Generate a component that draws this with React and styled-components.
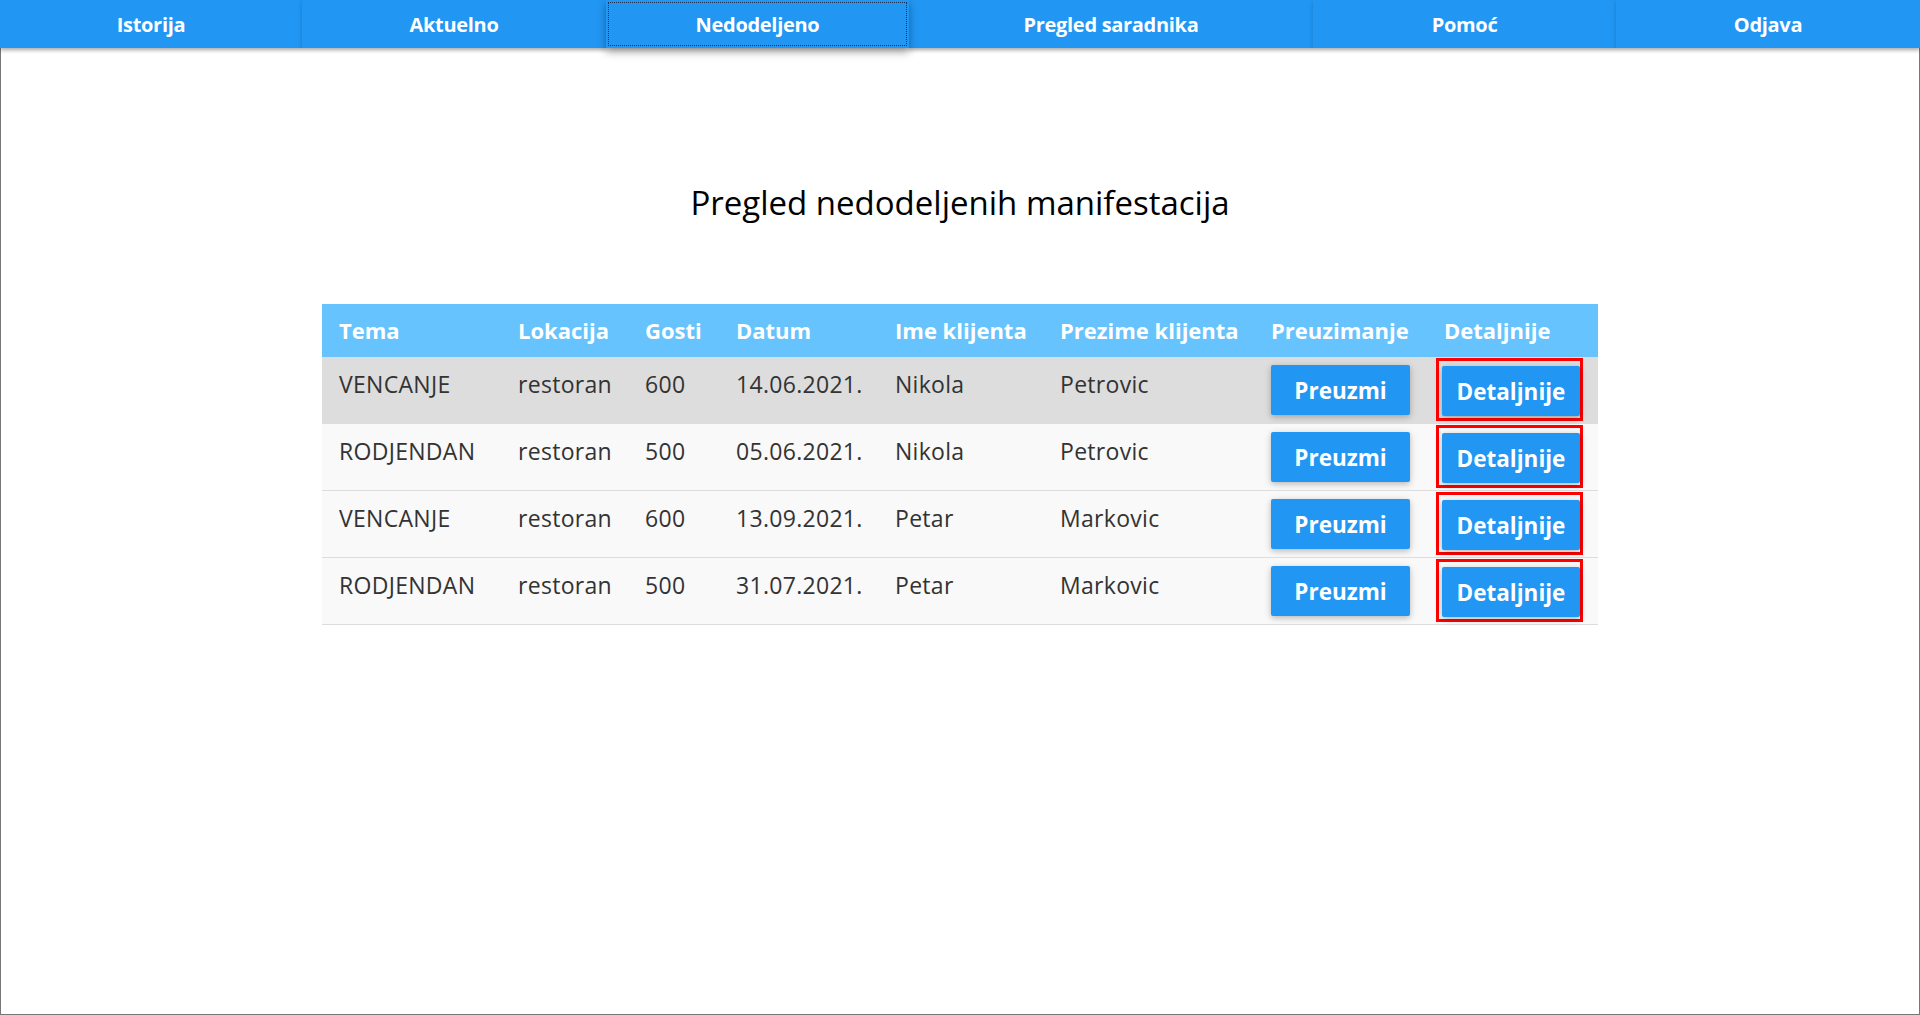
import React from 'react';
import styled, { createGlobalStyle } from 'styled-components';

const GlobalStyle = createGlobalStyle`
	html, body {
		margin: 0;
		padding: 0;
		background: #fff;
	}
	body {
		font-family: "Open Sans", "Noto Sans", sans-serif;
		color: #000;
	}
`;

const navItems = [
	{ label: 'Istorija', width: 302 },
	{ label: 'Aktuelno', width: 304 },
	{ label: 'Nedodeljeno', width: 303, active: true },
	{ label: 'Pregled saradnika', width: 404 },
	{ label: 'Pomoć', width: 303 },
	{ label: 'Odjava', width: 304 },
];

const columns = [
	{ title: 'Tema', width: 188 },
	{ title: 'Lokacija', width: 127 },
	{ title: 'Gosti', width: 91 },
	{ title: 'Datum', width: 159 },
	{ title: 'Ime klijenta', width: 165 },
	{ title: 'Prezime klijenta', width: 211 },
	{ title: 'Preuzimanje', width: 173 },
	{ title: 'Detaljnije', width: 162 },
];

const rows = [
	{ tema: 'VENCANJE', lokacija: 'restoran', gosti: 600, datum: '14.06.2021.', ime: 'Nikola', prezime: 'Petrovic' },
	{ tema: 'RODJENDAN', lokacija: 'restoran', gosti: 500, datum: '05.06.2021.', ime: 'Nikola', prezime: 'Petrovic' },
	{ tema: 'VENCANJE', lokacija: 'restoran', gosti: 600, datum: '13.09.2021.', ime: 'Petar', prezime: 'Markovic' },
	{ tema: 'RODJENDAN', lokacija: 'restoran', gosti: 500, datum: '31.07.2021.', ime: 'Petar', prezime: 'Markovic' },
];

const App = () => (
	<Page>
		<GlobalStyle />
		<NavBar>
			{navItems.map(item => (
				<NavItem key={item.label} $width={item.width} $active={item.active}>
					{item.label}
				</NavItem>
			))}
		</NavBar>
		<Frame>
			<Title>Pregled nedodeljenih manifestacija</Title>
			<Table>
				<colgroup>
					{columns.map(c => (
						<col key={c.title} style={{ width: c.width }} />
					))}
				</colgroup>
				<thead>
					<HeadRow>
						{columns.map(c => (
							<HeadCell key={c.title}>{c.title}</HeadCell>
						))}
					</HeadRow>
				</thead>
				<tbody>
					{rows.map((r, i) => (
						<BodyRow key={i} $hovered={i === 0}>
							<Cell>{r.tema}</Cell>
							<Cell>{r.lokacija}</Cell>
							<Cell>{r.gosti}</Cell>
							<Cell>{r.datum}</Cell>
							<Cell>{r.ime}</Cell>
							<Cell>{r.prezime}</Cell>
							<ButtonCell>
								<Button $width={139}>Preuzmi</Button>
							</ButtonCell>
							<DetailCell>
								<Marked>
									<Button $width={138}>Detaljnije</Button>
								</Marked>
							</DetailCell>
						</BodyRow>
					))}
				</tbody>
			</Table>
		</Frame>
	</Page>
);

export default App;

const Page = styled.div`
	display: flex;
	flex-direction: column;
	height: 100vh;
	box-sizing: border-box;
`;

const NavBar = styled.nav`
	display: flex;
	height: 48px;
	background: #2196f3;
	position: relative;
	z-index: 2;
	box-shadow: 0 2px 4px rgba(0, 0, 0, 0.18);
`;

const NavItem = styled.div`
	width: ${p => p.$width}px;
	flex: none;
	box-sizing: border-box;
	display: flex;
	align-items: center;
	justify-content: center;
	color: #fff;
	font-size: 20px;
	font-weight: 700;
	letter-spacing: -0.3px;
	background: #2196f3;
	box-shadow: 0 2px 4px rgba(0, 0, 0, 0.2);
	position: relative;
	${p =>
		p.$active &&
		`
		outline: 1px dotted #1a3050;
		outline-offset: -3px;
		box-shadow: 0 4px 8px rgba(0, 0, 0, 0.35);
		z-index: 1;
	`}
`;

const Frame = styled.main`
	flex: 1;
	border: 1px solid #777;
	border-top: none;
	display: flex;
	flex-direction: column;
	align-items: center;
`;

const Title = styled.h1`
	margin: 131px 0 0;
	font-size: 33px;
	font-weight: 400;
	line-height: 48px;
	letter-spacing: 0;
	color: #000;
`;

const Table = styled.table`
	margin-top: 77px;
	width: 1276px;
	border-collapse: collapse;
	table-layout: fixed;
	font-size: 23px;
	letter-spacing: 0.3px;
`;

const HeadRow = styled.tr`
	background: #66c3fd;
	color: #fff;
`;

const HeadCell = styled.th`
	text-align: left;
	font-size: 22px;
	font-weight: 700;
	letter-spacing: 0;
	padding: 10px 8px 10px;
	line-height: 33px;
	white-space: nowrap;
	&:first-child {
		padding-left: 17px;
	}
`;

const BodyRow = styled.tr`
	background: ${p => (p.$hovered ? '#dddddd' : '#f9f9f9')};
	border-bottom: 1px solid #dddddd;
	color: #333;
`;

const Cell = styled.td`
	padding: 11px 8px 8px;
	line-height: 33px;
	vertical-align: top;
	white-space: nowrap;
	&:first-child {
		padding-left: 17px;
	}
`;

const ButtonCell = styled.td`
	padding: 8px 8px 8px;
	vertical-align: top;
`;

const DetailCell = styled.td`
	padding: 1px 0 0;
	vertical-align: top;
`;

const Marked = styled.div`
	display: inline-block;
	border: 3px solid #ff0000;
	padding: 5px 0 2px 3px;
`;

const Button = styled.button`
	display: block;
	width: ${p => p.$width}px;
	height: 50px;
	border: none;
	border-radius: 2px;
	background: #2196f3;
	color: #fff;
	font-family: inherit;
	font-size: 22.5px;
	font-weight: 700;
	letter-spacing: 0;
	line-height: 33px;
	padding: 0;
	cursor: pointer;
	box-shadow: 0 2px 5px rgba(0, 0, 0, 0.16), 0 2px 10px rgba(0, 0, 0, 0.12);
`;
